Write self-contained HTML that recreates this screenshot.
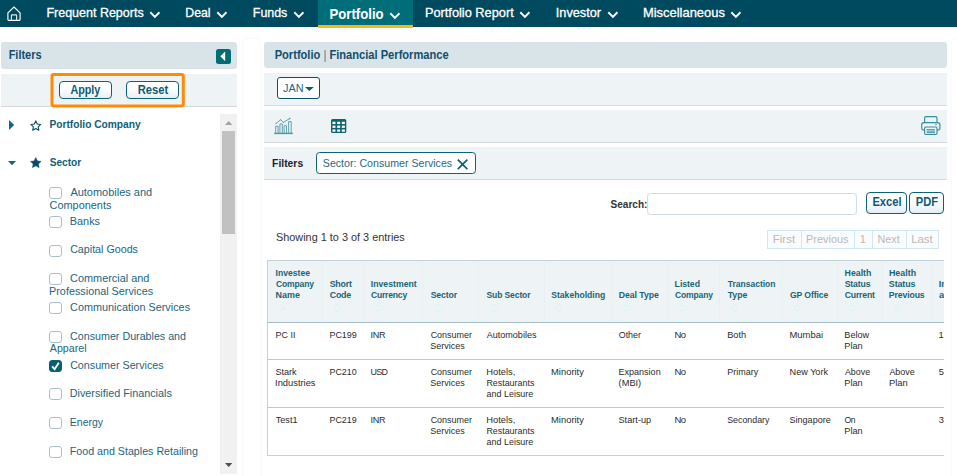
<!DOCTYPE html>
<html lang="en">
<head>
<meta charset="utf-8">
<title>Portfolio | Financial Performance</title>
<style>
*{box-sizing:border-box;margin:0;padding:0}
html,body{width:957px;height:476px;overflow:hidden;background:#fff}
body{position:relative;font-family:"Liberation Sans",sans-serif;font-size:11px;color:#333}
.a{position:absolute}
.t{position:absolute;white-space:nowrap;transform-origin:0 0;display:block}
svg{position:absolute;overflow:visible}
#nav{left:0;top:0;width:957px;height:27px;background:#004a60}
#tab{left:318px;top:0;width:95px;height:28px;background:#006e78;border-bottom:3px solid #ffb612}
.hdr{background:#d9e4e9;border-radius:3px}
.strip{background:#eef3f6;border-bottom:1px solid #d3d9dc}
.btn{border:1px solid #0f6273;border-radius:4px;background:linear-gradient(#ffffff,#fdfeff 45%,#e4eef7)}
.cb{left:49.3px;width:12.4px;height:12.3px;border:1px solid #a9c0ca;border-radius:3px;background:#fff}
.pg{top:230px;height:19px;border:1px solid #cfe7f6;background:#fafcfd}
#tw{left:267px;top:260px;width:677px;height:196px;overflow:hidden}
#tb{left:0;top:0;width:760px;height:196px;border:1px solid #c3d2d9;border-right:0}
.hl{left:0;width:760px;height:1px;background:#b7cbd3}
.vl{top:1px;width:1px;height:61px;background:#e9f0f3}
</style>
</head>
<body>
<!-- top navigation -->
<div id="nav" class="a"></div>
<div id="tab" class="a"></div>
<svg style="left:7.2px;top:6.2px" width="14" height="15" viewBox="0 0 14 15" fill="none" stroke="#fff" stroke-width="1.15" stroke-linejoin="round"><path d="M0.9 6.8 L7 1 L13.1 6.8 V13.6 Q13.1 14.3 12.4 14.3 H1.6 Q0.9 14.3 0.9 13.6 Z"/><path d="M4.4 14.3 V9.6 Q4.4 8.9 5.1 8.9 H8.9 Q9.6 8.9 9.6 9.6 V14.3" stroke="#dfe9ec"/></svg>
<svg style="left:150px;top:12.1px" width="9.8" height="6" viewBox="0 0 9.8 6" fill="none" stroke="#fff" stroke-width="1.9" stroke-linecap="square"><path d="M1 0.9 L4.9 4.8 L8.8 0.9"/></svg>
<svg style="left:217.2px;top:12.1px" width="9.8" height="6" viewBox="0 0 9.8 6" fill="none" stroke="#fff" stroke-width="1.9" stroke-linecap="square"><path d="M1 0.9 L4.9 4.8 L8.8 0.9"/></svg>
<svg style="left:294px;top:12.1px" width="9.8" height="6" viewBox="0 0 9.8 6" fill="none" stroke="#fff" stroke-width="1.9" stroke-linecap="square"><path d="M1 0.9 L4.9 4.8 L8.8 0.9"/></svg>
<svg style="left:389.5px;top:12.9px" width="9.8" height="6" viewBox="0 0 9.8 6" fill="none" stroke="#fff" stroke-width="1.9" stroke-linecap="square"><path d="M1 0.9 L4.9 4.8 L8.8 0.9"/></svg>
<svg style="left:520px;top:12.1px" width="9.8" height="6" viewBox="0 0 9.8 6" fill="none" stroke="#fff" stroke-width="1.9" stroke-linecap="square"><path d="M1 0.9 L4.9 4.8 L8.8 0.9"/></svg>
<svg style="left:608px;top:12.1px" width="9.8" height="6" viewBox="0 0 9.8 6" fill="none" stroke="#fff" stroke-width="1.9" stroke-linecap="square"><path d="M1 0.9 L4.9 4.8 L8.8 0.9"/></svg>
<svg style="left:731px;top:12.1px" width="9.8" height="6" viewBox="0 0 9.8 6" fill="none" stroke="#fff" stroke-width="1.9" stroke-linecap="square"><path d="M1 0.9 L4.9 4.8 L8.8 0.9"/></svg>

<!-- sidebar -->
<div class="a hdr" style="left:1px;top:42px;width:236px;height:26.5px"></div>
<div class="a" style="left:216px;top:49.3px;width:15px;height:14.4px;background:#006c76;border-radius:2.5px"></div>
<svg style="left:216px;top:49.3px" width="15" height="14.4" viewBox="0 0 15 14.4"><path d="M9.2 2.4 V12.3 L4.3 7.35 Z" fill="#fff"/></svg>
<div class="a strip" style="left:1px;top:74px;width:236px;height:32.7px"></div>
<svg style="left:0;top:0" width="240" height="120" viewBox="0 0 240 120"><rect x="52" y="74.6" width="131.3" height="31.3" rx="1.8" fill="none" stroke="#ff8a05" stroke-width="3"/></svg>
<div class="a btn" style="left:59px;top:81px;width:53px;height:17.8px"></div>
<div class="a btn" style="left:126px;top:81px;width:53px;height:17.8px"></div>
<svg style="left:8.8px;top:119.8px" width="5.2" height="10" viewBox="0 0 5.2 10"><path d="M0 0 L5.2 5 L0 10 Z" fill="#0b6b7c"/></svg>
<svg style="left:30px;top:120px" width="11.6" height="11" viewBox="0 0 24 23" fill="none" stroke="#0b4a66" stroke-width="2.3" stroke-linejoin="round"><path d="M12 1.8 L15.1 8.4 L22.3 9.3 L17 14.2 L18.4 21.3 L12 17.8 L5.6 21.3 L7 14.2 L1.7 9.3 L8.9 8.4 Z"/></svg>
<svg style="left:7.5px;top:161.2px" width="8" height="4.2" viewBox="0 0 8 4.2"><path d="M0 0 H8 L4 4.2 Z" fill="#0b6b7c"/></svg>
<svg style="left:30px;top:157.4px" width="11.6" height="11.2" viewBox="0 0 24 23" fill="#0b4a66" stroke="#0b4a66" stroke-width="1.2" stroke-linejoin="round"><path d="M12 1.2 L15.3 8.2 L22.9 9.1 L17.3 14.3 L18.8 21.9 L12 18.1 L5.2 21.9 L6.7 14.3 L1.1 9.1 L8.7 8.2 Z"/></svg>
<div class="a cb" style="top:187px"></div>
<div class="a cb" style="top:215.9px"></div>
<div class="a cb" style="top:244.5px"></div>
<div class="a cb" style="top:273.2px"></div>
<div class="a cb" style="top:302.1px"></div>
<div class="a cb" style="top:331px"></div>
<div class="a cb" style="top:359.7px;background:#0a6070;border-color:#0a6070"></div><svg style="left:49px;top:359.7px" width="13" height="12.5" viewBox="0 0 13 12.5" fill="none" stroke="#fff" stroke-width="1.9"><path d="M3.2 6.4 L5.6 9.2 L9.8 2.8"/></svg>
<div class="a cb" style="top:388.2px"></div>
<div class="a cb" style="top:417px"></div>
<div class="a cb" style="top:445.9px"></div>

<div class="a" style="left:220px;top:114px;width:17px;height:359.5px;background:#f1f1f1"></div>
<div class="a" style="left:222px;top:131px;width:13px;height:103px;background:#c1c1c1"></div>
<svg style="left:225px;top:121px" width="7.4" height="3.9" viewBox="0 0 7.4 3.9"><path d="M0 3.9 H7.4 L3.7 0 Z" fill="#a3a3a3"/></svg>
<svg style="left:224.8px;top:463px" width="7.4" height="4" viewBox="0 0 7.4 4"><path d="M0 0 H7.4 L3.7 4 Z" fill="#505050"/></svg>
<div class="a" style="left:242px;top:38px;width:18.5px;height:450px;border:1px solid #f9fafa;border-radius:5px"></div>
<div class="a" style="left:951px;top:38px;width:18px;height:450px;border:1px solid #f9fafa;border-radius:5px"></div>
<!-- main -->
<div class="a hdr" style="left:264px;top:42px;width:683px;height:25.7px"></div>
<div class="a strip" style="left:264px;top:73px;width:683px;height:32.6px"></div>
<div class="a" style="left:277.3px;top:77.4px;width:42.7px;height:21.4px;border:1px solid #0c5369;border-radius:3px;background:#fff"></div>
<svg style="left:305.4px;top:87px" width="8.8" height="3.9" viewBox="0 0 8.8 3.9"><path d="M0 0 H8.8 L4.4 3.9 Z" fill="#0b5c6b"/></svg>
<div class="a strip" style="left:264px;top:110px;width:683px;height:32.7px"></div>
<svg style="left:274px;top:117.6px" width="19" height="16.4" viewBox="0 0 19 16.4" fill="none" stroke="#46959e" stroke-width="0.85"><path d="M0.2 15.4 H18.8" stroke-width="1.5" stroke="#4a98a1"/><path d="M1.7 14.8 V8.2 H4.1 V14.8 M5.9 14.8 V6 H8.3 V14.8 M10.1 14.8 V7.8 H12.5 V14.8 M14.6 14.8 V3.6 H17.2 V14.8"/><path d="M1.9 5.6 L6.6 1.8 L9.4 4.4 L15.6 0.6" stroke-width="0.85"/><circle cx="1.9" cy="5.6" r="0.55" fill="#46959e" stroke="none"/><circle cx="6.6" cy="1.8" r="0.55" fill="#46959e" stroke="none"/><circle cx="9.4" cy="4.4" r="0.55" fill="#46959e" stroke="none"/><circle cx="15.8" cy="0.6" r="0.8" fill="#46959e" stroke="none"/></svg>
<svg style="left:330.8px;top:119px" width="15.3" height="14.1" viewBox="0 0 15.3 14.1"><rect width="15.3" height="14.1" rx="1.6" fill="#0b6670"/><rect x="1.45" y="2.75" width="3.0" height="2.3" fill="#fff"/><rect x="6.15" y="2.75" width="3.0" height="2.3" fill="#fff"/><rect x="10.85" y="2.75" width="3.0" height="2.3" fill="#fff"/><rect x="1.45" y="6.60" width="3.0" height="2.3" fill="#fff"/><rect x="6.15" y="6.60" width="3.0" height="2.3" fill="#fff"/><rect x="10.85" y="6.60" width="3.0" height="2.3" fill="#fff"/><rect x="1.45" y="10.45" width="3.0" height="2.3" fill="#fff"/><rect x="6.15" y="10.45" width="3.0" height="2.3" fill="#fff"/><rect x="10.85" y="10.45" width="3.0" height="2.3" fill="#fff"/></svg>
<svg style="left:920.8px;top:116.2px" width="19.6" height="19.2" viewBox="0 0 19.6 19.2" fill="none" stroke="#36909a" stroke-width="1.15" stroke-linejoin="round"><path d="M3.6 6.6 V2 Q3.6 0.7 4.9 0.7 H14.7 Q16 0.7 16 2 V6.6"/><rect x="0.7" y="6.6" width="18.2" height="7.6" rx="2.2"/><rect x="3.6" y="11" width="12.4" height="7.5" rx="1.2" fill="#eef3f6"/><path d="M5.6 13.6 H14 M5.6 15.2 H14 M5.6 16.6 H14" stroke-width="1.1" stroke="#5aa3ac"/><circle cx="15" cy="8.4" r="0.75" fill="#2f8a95" stroke="none"/></svg>

<div class="a strip" style="left:264px;top:147.1px;width:683px;height:32.7px"></div>
<div class="a" style="left:315.7px;top:152px;width:160.5px;height:22px;border:1px solid #0f6273;border-radius:3.5px;background:#fff"></div>
<svg style="left:456.8px;top:158.6px" width="11.2" height="10.8" viewBox="0 0 11.2 10.8" stroke="#0a6470" stroke-width="1.7" fill="none"><path d="M0.8 0.6 L10.4 10.2 M10.4 0.6 L0.8 10.2"/></svg>
<div class="a" style="left:647px;top:193.2px;width:210px;height:21.6px;border:1px solid #cfdde4;border-radius:3.5px;background:#fff"></div>
<div class="a btn" style="left:866px;top:191.8px;width:40.8px;height:22.1px"></div>
<div class="a btn" style="left:909px;top:191.8px;width:34.8px;height:22.1px"></div>
<div class="a pg" style="left:767px;width:34.5px"></div>
<div class="a pg" style="left:800.5px;width:54px"></div>
<div class="a pg" style="left:853.5px;width:19px"></div>
<div class="a pg" style="left:871.5px;width:35px"></div>
<div class="a pg" style="left:905.5px;width:33.5px"></div>
<span class="t" style="left:46px;top:6.10px;font-size:13px;line-height:13px;color:#fff;transform:translateX(0.38px) scaleX(0.9616);-webkit-text-stroke:0.3px #fff;">Frequent Reports</span>
<span class="t" style="left:185px;top:6.10px;font-size:13px;line-height:13px;color:#fff;transform:translateX(0.32px) scaleX(0.9433);-webkit-text-stroke:0.3px #fff;">Deal</span>
<span class="t" style="left:252px;top:6.10px;font-size:13px;line-height:13px;color:#fff;transform:translateX(0.83px) scaleX(0.9528);-webkit-text-stroke:0.3px #fff;">Funds</span>
<span class="t" style="left:329px;top:7.25px;font-size:14px;line-height:14px;font-weight:700;color:#fff;transform:translateX(0.58px) scaleX(0.9382);">Portfolio</span>
<span class="t" style="left:424px;top:6.10px;font-size:13px;line-height:13px;color:#fff;transform:translateX(0.91px) scaleX(0.9832);-webkit-text-stroke:0.3px #fff;">Portfolio Report</span>
<span class="t" style="left:555px;top:6.10px;font-size:13px;line-height:13px;color:#fff;transform:translateX(0.82px) scaleX(0.9777);-webkit-text-stroke:0.3px #fff;">Investor</span>
<span class="t" style="left:642px;top:6.10px;font-size:13px;line-height:13px;color:#fff;transform:translateX(0.9px) scaleX(0.9952);-webkit-text-stroke:0.3px #fff;">Miscellaneous</span>
<span class="t" style="left:8px;top:48.94px;font-size:12px;line-height:12px;font-weight:700;color:#144e6c;transform:translateX(0.65px) scaleX(0.9153);">Filters</span>
<span class="t" style="left:70px;top:83.94px;font-size:12px;line-height:12px;font-weight:700;color:#0f5a73;transform:translateX(0.41px) scaleX(0.8971);">Apply</span>
<span class="t" style="left:137px;top:83.94px;font-size:12px;line-height:12px;font-weight:700;color:#0f5a73;transform:translateX(0.79px) scaleX(0.9324);">Reset</span>
<span class="t" style="left:49px;top:118.79px;font-size:11px;line-height:11px;font-weight:700;color:#0e5f78;transform:translateX(0.49px) scaleX(0.9265);">Portfolio Company</span>
<span class="t" style="left:49px;top:156.79px;font-size:11px;line-height:11px;font-weight:700;color:#0e5f78;transform:translateX(0.7px) scaleX(0.9215);">Sector</span>
<span class="t" style="left:70px;top:186.79px;font-size:11px;line-height:11px;color:#1c6580;transform:translateX(0.38px) scaleX(0.9973);">Automobiles and</span>
<span class="t" style="left:49px;top:199.79px;font-size:11px;line-height:11px;color:#1c6580;transform:translateX(0.56px) scaleX(0.9908);">Components</span>
<span class="t" style="left:69px;top:215.79px;font-size:11px;line-height:11px;color:#1c6580;transform:translateX(0.75px) scaleX(0.9904);">Banks</span>
<span class="t" style="left:70px;top:243.79px;font-size:11px;line-height:11px;color:#1c6580;transform:translateX(0.14px) scaleX(0.9729);">Capital Goods</span>
<span class="t" style="left:70px;top:272.79px;font-size:11px;line-height:11px;color:#1c6580;transform:translateX(0.12px) scaleX(0.99);">Commercial and</span>
<span class="t" style="left:49px;top:285.79px;font-size:11px;line-height:11px;color:#1c6580;transform:translateX(0.05px) scaleX(0.9837);">Professional Services</span>
<span class="t" style="left:70px;top:301.79px;font-size:11px;line-height:11px;color:#1c6580;transform:translateX(0.12px) scaleX(0.9859);">Communication Services</span>
<span class="t" style="left:70px;top:330.79px;font-size:11px;line-height:11px;color:#1c6580;transform:translateX(0.12px) scaleX(0.9719);">Consumer Durables and</span>
<span class="t" style="left:49px;top:342.79px;font-size:11px;line-height:11px;color:#1c6580;transform:translateX(0.87px) scaleX(0.9658);">Apparel</span>
<span class="t" style="left:70px;top:359.79px;font-size:11px;line-height:11px;color:#1c6580;transform:translateX(0.14px) scaleX(0.9734);">Consumer Services</span>
<span class="t" style="left:69px;top:387.79px;font-size:11px;line-height:11px;color:#1c6580;transform:translateX(0.73px) scaleX(0.9822);">Diversified Financials</span>
<span class="t" style="left:69px;top:416.79px;font-size:11px;line-height:11px;color:#1c6580;transform:translateX(0.86px) scaleX(0.9543);">Energy</span>
<span class="t" style="left:69px;top:445.79px;font-size:11px;line-height:11px;color:#1c6580;transform:translateX(0.77px) scaleX(0.9702);">Food and Staples Retailing</span>
<span class="t" style="left:274px;top:48.94px;font-size:12px;line-height:12px;font-weight:700;color:#144e6c;transform:translateX(0.64px) scaleX(0.9265);">Portfolio <span style="font-weight:400;color:#3f7f93">|</span> Financial Performance</span>
<span class="t" style="left:282px;top:82.79px;font-size:11px;line-height:11px;color:#1c6580;transform:translateX(0.99px) scaleX(0.9851);">JAN</span>
<span class="t" style="left:272px;top:157.79px;font-size:11px;line-height:11px;font-weight:700;color:#222;transform:translateX(0.09px) scaleX(0.9411);">Filters</span>
<span class="t" style="left:322px;top:157.79px;font-size:11px;line-height:11px;color:#2a6a80;transform:translateX(0.79px) scaleX(0.9662);">Sector: Consumer Services</span>
<span class="t" style="left:610px;top:198.79px;font-size:11px;line-height:11px;font-weight:700;color:#333;transform:translateX(0.51px) scaleX(0.9152);">Search:</span>
<span class="t" style="left:872px;top:195.94px;font-size:12px;line-height:12px;font-weight:700;color:#0f5a73;transform:translateX(0.43px) scaleX(0.9288);">Excel</span>
<span class="t" style="left:915px;top:195.94px;font-size:12px;line-height:12px;font-weight:700;color:#0f5a73;transform:translateX(0.82px) scaleX(0.9246);">PDF</span>
<span class="t" style="left:275px;top:231.79px;font-size:11px;line-height:11px;color:#333;transform:translateX(0.95px) scaleX(0.9893);">Showing 1 to 3 of 3 entries</span>
<span class="t" style="left:772px;top:233.79px;font-size:11px;line-height:11px;color:#b9b9b9;transform:translateX(0.71px) scaleX(1.0476);">First</span>
<span class="t" style="left:806px;top:233.79px;font-size:11px;line-height:11px;color:#b9b9b9;transform:translateX(0.09px) scaleX(0.9896);">Previous</span>
<span class="t" style="left:859px;top:233.79px;font-size:11px;line-height:11px;color:#b9b9b9;transform:translateX(0.72px) scaleX(1);">1</span>
<span class="t" style="left:877px;top:233.79px;font-size:11px;line-height:11px;color:#b9b9b9;transform:translateX(0.5px) scaleX(0.9835);">Next</span>
<span class="t" style="left:911px;top:233.79px;font-size:11px;line-height:11px;color:#b9b9b9;transform:translateX(0.22px) scaleX(1.0322);">Last</span>
<!-- table -->
<div id="tw" class="a">
<div id="tb" class="a"></div>
<div class="a" style="left:1px;top:1px;width:760px;height:61.5px;background:#eef3f6"></div>
<div class="a vl" style="left:54.5px"></div><div class="a vl" style="left:96.2px"></div><div class="a vl" style="left:155.2px"></div><div class="a vl" style="left:211.3px"></div><div class="a vl" style="left:276.6px"></div><div class="a vl" style="left:343.6px"></div><div class="a vl" style="left:399.5px"></div><div class="a vl" style="left:452.2px"></div><div class="a vl" style="left:514.8px"></div><div class="a vl" style="left:569.5px"></div><div class="a vl" style="left:614.5px"></div><div class="a vl" style="left:664.1px"></div>
<div class="a hl" style="top:62px;background:#a5c0ca"></div>
<div class="a hl" style="top:99px"></div>
<div class="a hl" style="top:147px"></div>
<svg style="left:12.7px;top:46px" width="6.6" height="4" viewBox="0 0 6.6 4"><path d="M0 4 H6.6 L3.3 0 Z" fill="#d6f6fa"/></svg><svg style="left:67.2px;top:43.8px" width="6.4" height="8.4" viewBox="0 0 6.4 8.4" fill="none" stroke="#d6f6fa" stroke-width="1.1"><path d="M0.5 3.2 L3.2 0.7 L5.9 3.2 M0.5 5.2 L3.2 7.7 L5.9 5.2"/></svg><svg style="left:108.3px;top:43.8px" width="6.4" height="8.4" viewBox="0 0 6.4 8.4" fill="none" stroke="#d6f6fa" stroke-width="1.1"><path d="M0.5 3.2 L3.2 0.7 L5.9 3.2 M0.5 5.2 L3.2 7.7 L5.9 5.2"/></svg><svg style="left:168.2px;top:43.8px" width="6.4" height="8.4" viewBox="0 0 6.4 8.4" fill="none" stroke="#d6f6fa" stroke-width="1.1"><path d="M0.5 3.2 L3.2 0.7 L5.9 3.2 M0.5 5.2 L3.2 7.7 L5.9 5.2"/></svg><svg style="left:224.0px;top:43.8px" width="6.4" height="8.4" viewBox="0 0 6.4 8.4" fill="none" stroke="#d6f6fa" stroke-width="1.1"><path d="M0.5 3.2 L3.2 0.7 L5.9 3.2 M0.5 5.2 L3.2 7.7 L5.9 5.2"/></svg><svg style="left:288.7px;top:43.8px" width="6.4" height="8.4" viewBox="0 0 6.4 8.4" fill="none" stroke="#d6f6fa" stroke-width="1.1"><path d="M0.5 3.2 L3.2 0.7 L5.9 3.2 M0.5 5.2 L3.2 7.7 L5.9 5.2"/></svg><svg style="left:356.3px;top:43.8px" width="6.4" height="8.4" viewBox="0 0 6.4 8.4" fill="none" stroke="#d6f6fa" stroke-width="1.1"><path d="M0.5 3.2 L3.2 0.7 L5.9 3.2 M0.5 5.2 L3.2 7.7 L5.9 5.2"/></svg><svg style="left:412.1px;top:43.8px" width="6.4" height="8.4" viewBox="0 0 6.4 8.4" fill="none" stroke="#d6f6fa" stroke-width="1.1"><path d="M0.5 3.2 L3.2 0.7 L5.9 3.2 M0.5 5.2 L3.2 7.7 L5.9 5.2"/></svg><svg style="left:464.8px;top:43.8px" width="6.4" height="8.4" viewBox="0 0 6.4 8.4" fill="none" stroke="#d6f6fa" stroke-width="1.1"><path d="M0.5 3.2 L3.2 0.7 L5.9 3.2 M0.5 5.2 L3.2 7.7 L5.9 5.2"/></svg><svg style="left:527.1px;top:43.8px" width="6.4" height="8.4" viewBox="0 0 6.4 8.4" fill="none" stroke="#d6f6fa" stroke-width="1.1"><path d="M0.5 3.2 L3.2 0.7 L5.9 3.2 M0.5 5.2 L3.2 7.7 L5.9 5.2"/></svg><svg style="left:581.9px;top:43.8px" width="6.4" height="8.4" viewBox="0 0 6.4 8.4" fill="none" stroke="#d6f6fa" stroke-width="1.1"><path d="M0.5 3.2 L3.2 0.7 L5.9 3.2 M0.5 5.2 L3.2 7.7 L5.9 5.2"/></svg><svg style="left:626.4px;top:43.8px" width="6.4" height="8.4" viewBox="0 0 6.4 8.4" fill="none" stroke="#d6f6fa" stroke-width="1.1"><path d="M0.5 3.2 L3.2 0.7 L5.9 3.2 M0.5 5.2 L3.2 7.7 L5.9 5.2"/></svg>
<span class="t" style="left:8px;top:7.64px;font-size:10px;line-height:10px;font-weight:700;color:#1a6478;letter-spacing:-0.015px;transform-origin:0 8.46px;transform:translateX(0.62px) scale(0.8613,0.95);">Investee</span>
<span class="t" style="left:8px;top:18.64px;font-size:10px;line-height:10px;font-weight:700;color:#1a6478;letter-spacing:-0.167px;transform-origin:0 8.46px;transform:translateX(0.93px) scale(0.8545,0.95);">Company</span>
<span class="t" style="left:8px;top:29.64px;font-size:10px;line-height:10px;font-weight:700;color:#1a6478;transform-origin:0 8.46px;transform:translateX(0.59px) scale(0.8919,0.95);">Name</span>
<span class="t" style="left:62px;top:18.64px;font-size:10px;line-height:10px;font-weight:700;color:#1a6478;letter-spacing:-0.206px;transform-origin:0 8.46px;transform:translateX(0.64px) scale(0.8849,0.95);">Short</span>
<span class="t" style="left:62px;top:29.64px;font-size:10px;line-height:10px;font-weight:700;color:#1a6478;letter-spacing:-0.265px;transform-origin:0 8.46px;transform:translateX(0.71px) scale(0.887,0.95);">Code</span>
<span class="t" style="left:103px;top:18.64px;font-size:10px;line-height:10px;font-weight:700;color:#1a6478;transform-origin:0 8.46px;transform:translateX(0.75px) scale(0.8711,0.95);">Investment</span>
<span class="t" style="left:103px;top:29.64px;font-size:10px;line-height:10px;font-weight:700;color:#1a6478;letter-spacing:-0.23px;transform-origin:0 8.46px;transform:translateX(0.93px) scale(0.8575,0.95);">Currency</span>
<span class="t" style="left:163px;top:29.64px;font-size:10px;line-height:10px;font-weight:700;color:#1a6478;letter-spacing:-0.127px;transform-origin:0 8.46px;transform:translateX(0.66px) scale(0.8661,0.95);">Sector</span>
<span class="t" style="left:219px;top:29.64px;font-size:10px;line-height:10px;font-weight:700;color:#1a6478;letter-spacing:-0.137px;transform-origin:0 8.46px;transform:translateX(0.47px) scale(0.855,0.95);">Sub Sector</span>
<span class="t" style="left:284px;top:29.64px;font-size:10px;line-height:10px;font-weight:700;color:#1a6478;transform-origin:0 8.46px;transform:translateX(0.25px) scale(0.8594,0.95);">Stakeholding</span>
<span class="t" style="left:351px;top:29.64px;font-size:10px;line-height:10px;font-weight:700;color:#1a6478;letter-spacing:-0.034px;transform-origin:0 8.46px;transform:translateX(0.76px) scale(0.8683,0.95);">Deal Type</span>
<span class="t" style="left:407px;top:18.64px;font-size:10px;line-height:10px;font-weight:700;color:#1a6478;letter-spacing:-0.058px;transform-origin:0 8.46px;transform:translateX(0.62px) scale(0.8688,0.95);">Listed</span>
<span class="t" style="left:407px;top:29.64px;font-size:10px;line-height:10px;font-weight:700;color:#1a6478;letter-spacing:-0.167px;transform-origin:0 8.46px;transform:translateX(0.93px) scale(0.8545,0.95);">Company</span>
<span class="t" style="left:460px;top:18.64px;font-size:10px;line-height:10px;font-weight:700;color:#1a6478;transform-origin:0 8.46px;transform:translateX(0.74px) scale(0.8501,0.95);">Transaction</span>
<span class="t" style="left:460px;top:29.64px;font-size:10px;line-height:10px;font-weight:700;color:#1a6478;letter-spacing:-0.099px;transform-origin:0 8.46px;transform:translateX(0.73px) scale(0.8765,0.95);">Type</span>
<span class="t" style="left:522px;top:29.64px;font-size:10px;line-height:10px;font-weight:700;color:#1a6478;letter-spacing:-0.096px;transform-origin:0 8.46px;transform:translateX(0.9px) scale(0.8593,0.95);">GP Office</span>
<span class="t" style="left:577px;top:7.64px;font-size:10px;line-height:10px;font-weight:700;color:#1a6478;transform-origin:0 8.46px;transform:translateX(0.56px) scale(0.8763,0.95);">Health</span>
<span class="t" style="left:577px;top:18.64px;font-size:10px;line-height:10px;font-weight:700;color:#1a6478;letter-spacing:-0.129px;transform-origin:0 8.46px;transform:translateX(0.63px) scale(0.8691,0.95);">Status</span>
<span class="t" style="left:577px;top:29.64px;font-size:10px;line-height:10px;font-weight:700;color:#1a6478;letter-spacing:-0.238px;transform-origin:0 8.46px;transform:translateX(0.73px) scale(0.8695,0.95);">Current</span>
<span class="t" style="left:621px;top:7.64px;font-size:10px;line-height:10px;font-weight:700;color:#1a6478;transform-origin:0 8.46px;transform:translateX(0.97px) scale(0.8865,0.95);">Health</span>
<span class="t" style="left:621px;top:18.64px;font-size:10px;line-height:10px;font-weight:700;color:#1a6478;letter-spacing:-0.105px;transform-origin:0 8.46px;transform:translateX(0.82px) scale(0.8873,0.95);">Status</span>
<span class="t" style="left:621px;top:29.64px;font-size:10px;line-height:10px;font-weight:700;color:#1a6478;letter-spacing:-0.128px;transform-origin:0 8.46px;transform:translateX(0.78px) scale(0.8688,0.95);">Previous</span>
<span class="t" style="left:671px;top:18.64px;font-size:10px;line-height:10px;font-weight:700;color:#1a6478;letter-spacing:-0.1px;transform-origin:0 8.46px;transform:translateX(0.81px) scale(0.93,0.95);">Investment</span>
<span class="t" style="left:671px;top:29.64px;font-size:10px;line-height:10px;font-weight:700;color:#1a6478;letter-spacing:-0.1px;transform-origin:0 8.46px;transform:translateX(0.96px) scale(0.93,0.95);">amount</span>
<span class="t" style="left:8px;top:69.64px;font-size:10px;line-height:10px;color:#2b2b2b;transform-origin:0 8.46px;transform:translateX(0.62px) scale(0.8915,0.95);">PC II</span>
<span class="t" style="left:62px;top:69.64px;font-size:10px;line-height:10px;color:#2b2b2b;transform-origin:0 8.46px;transform:translateX(0.43px) scale(0.8932,0.95);">PC199</span>
<span class="t" style="left:103px;top:69.64px;font-size:10px;line-height:10px;color:#2b2b2b;letter-spacing:-0.345px;transform-origin:0 8.46px;transform:translateX(0.51px) scale(0.9041,0.95);">INR</span>
<span class="t" style="left:163px;top:69.64px;font-size:10px;line-height:10px;color:#2b2b2b;transform-origin:0 8.46px;transform:translateX(0.63px) scale(0.895,0.95);">Consumer</span>
<span class="t" style="left:163px;top:80.64px;font-size:10px;line-height:10px;color:#2b2b2b;transform-origin:0 8.46px;transform:translateX(0.28px) scale(0.8955,0.95);">Services</span>
<span class="t" style="left:219px;top:69.64px;font-size:10px;line-height:10px;color:#2b2b2b;transform-origin:0 8.46px;transform:translateX(0.65px) scale(0.9057,0.95);">Automobiles</span>
<span class="t" style="left:351px;top:69.64px;font-size:10px;line-height:10px;color:#2b2b2b;letter-spacing:-0.081px;transform-origin:0 8.46px;transform:translateX(0.83px) scale(0.8921,0.95);">Other</span>
<span class="t" style="left:407px;top:69.64px;font-size:10px;line-height:10px;color:#2b2b2b;letter-spacing:-0.603px;transform-origin:0 8.46px;transform:translateX(0.59px) scale(0.9494,0.95);">No</span>
<span class="t" style="left:460px;top:69.64px;font-size:10px;line-height:10px;color:#2b2b2b;transform-origin:0 8.46px;transform:translateX(0.14px) scale(0.9187,0.95);">Both</span>
<span class="t" style="left:522px;top:69.64px;font-size:10px;line-height:10px;color:#2b2b2b;transform-origin:0 8.46px;transform:translateX(0.52px) scale(0.9425,0.95);">Mumbai</span>
<span class="t" style="left:577px;top:69.64px;font-size:10px;line-height:10px;color:#2b2b2b;transform-origin:0 8.46px;transform:translateX(0.34px) scale(0.9101,0.95);">Below</span>
<span class="t" style="left:577px;top:80.64px;font-size:10px;line-height:10px;color:#2b2b2b;transform-origin:0 8.46px;transform:translateX(0.3px) scale(0.9161,0.95);">Plan</span>
<span class="t" style="left:671px;top:69.64px;font-size:10px;line-height:10px;color:#2b2b2b;letter-spacing:-0.1px;transform-origin:0 8.46px;transform:translateX(0.51px) scale(0.93,0.95);">1,250.00</span>
<span class="t" style="left:8px;top:106.64px;font-size:10px;line-height:10px;color:#2b2b2b;letter-spacing:-0.073px;transform-origin:0 8.46px;transform:translateX(0.59px) scale(0.9105,0.95);">Stark</span>
<span class="t" style="left:8px;top:117.64px;font-size:10px;line-height:10px;color:#2b2b2b;transform-origin:0 8.46px;transform:translateX(0.05px) scale(0.9339,0.95);">Industries</span>
<span class="t" style="left:62px;top:106.64px;font-size:10px;line-height:10px;color:#2b2b2b;transform-origin:0 8.46px;transform:translateX(0.43px) scale(0.892,0.95);">PC210</span>
<span class="t" style="left:103px;top:106.64px;font-size:10px;line-height:10px;color:#2b2b2b;letter-spacing:-0.803px;transform-origin:0 8.46px;transform:translateX(0.61px) scale(0.8954,0.95);">USD</span>
<span class="t" style="left:163px;top:106.64px;font-size:10px;line-height:10px;color:#2b2b2b;transform-origin:0 8.46px;transform:translateX(0.63px) scale(0.895,0.95);">Consumer</span>
<span class="t" style="left:163px;top:117.64px;font-size:10px;line-height:10px;color:#2b2b2b;transform-origin:0 8.46px;transform:translateX(0.28px) scale(0.8955,0.95);">Services</span>
<span class="t" style="left:219px;top:106.64px;font-size:10px;line-height:10px;color:#2b2b2b;transform-origin:0 8.46px;transform:translateX(0.29px) scale(0.9338,0.95);">Hotels,</span>
<span class="t" style="left:219px;top:117.64px;font-size:10px;line-height:10px;color:#2b2b2b;transform-origin:0 8.46px;transform:translateX(0.39px) scale(0.889,0.95);">Restaurants</span>
<span class="t" style="left:219px;top:128.64px;font-size:10px;line-height:10px;color:#2b2b2b;transform-origin:0 8.46px;transform:translateX(0.61px) scale(0.8928,0.95);">and Leisure</span>
<span class="t" style="left:284px;top:106.64px;font-size:10px;line-height:10px;color:#2b2b2b;transform-origin:0 8.46px;transform:translateX(0.04px) scale(0.9382,0.95);">Minority</span>
<span class="t" style="left:351px;top:106.64px;font-size:10px;line-height:10px;color:#2b2b2b;transform-origin:0 8.46px;transform:translateX(0.57px) scale(0.901,0.95);">Expansion</span>
<span class="t" style="left:351px;top:117.64px;font-size:10px;line-height:10px;color:#2b2b2b;transform-origin:0 8.46px;transform:translateX(0.6px) scale(0.9244,0.95);">(MBI)</span>
<span class="t" style="left:407px;top:106.64px;font-size:10px;line-height:10px;color:#2b2b2b;letter-spacing:-0.603px;transform-origin:0 8.46px;transform:translateX(0.59px) scale(0.9494,0.95);">No</span>
<span class="t" style="left:460px;top:106.64px;font-size:10px;line-height:10px;color:#2b2b2b;transform-origin:0 8.46px;transform:translateX(0.2px) scale(0.8981,0.95);">Primary</span>
<span class="t" style="left:522px;top:106.64px;font-size:10px;line-height:10px;color:#2b2b2b;transform-origin:0 8.46px;transform:translateX(0.58px) scale(0.9093,0.95);">New York</span>
<span class="t" style="left:577px;top:106.64px;font-size:10px;line-height:10px;color:#2b2b2b;transform-origin:0 8.46px;transform:translateX(0.88px) scale(0.8885,0.95);">Above</span>
<span class="t" style="left:577px;top:117.64px;font-size:10px;line-height:10px;color:#2b2b2b;transform-origin:0 8.46px;transform:translateX(0.3px) scale(0.9161,0.95);">Plan</span>
<span class="t" style="left:622px;top:106.64px;font-size:10px;line-height:10px;color:#2b2b2b;transform-origin:0 8.46px;transform:translateX(0.38px) scale(0.8944,0.95);">Above</span>
<span class="t" style="left:621px;top:117.64px;font-size:10px;line-height:10px;color:#2b2b2b;transform-origin:0 8.46px;transform:translateX(0.9px) scale(0.9413,0.95);">Plan</span>
<span class="t" style="left:671px;top:106.64px;font-size:10px;line-height:10px;color:#2b2b2b;letter-spacing:-0.1px;transform-origin:0 8.46px;transform:translateX(0.75px) scale(0.93,0.95);">5,000.00</span>
<span class="t" style="left:8px;top:154.64px;font-size:10px;line-height:10px;color:#2b2b2b;transform-origin:0 8.46px;transform:translateX(0.71px) scale(0.9113,0.95);">Test1</span>
<span class="t" style="left:62px;top:154.64px;font-size:10px;line-height:10px;color:#2b2b2b;transform-origin:0 8.46px;transform:translateX(0.43px) scale(0.8932,0.95);">PC219</span>
<span class="t" style="left:103px;top:154.64px;font-size:10px;line-height:10px;color:#2b2b2b;letter-spacing:-0.345px;transform-origin:0 8.46px;transform:translateX(0.51px) scale(0.9041,0.95);">INR</span>
<span class="t" style="left:163px;top:154.64px;font-size:10px;line-height:10px;color:#2b2b2b;transform-origin:0 8.46px;transform:translateX(0.63px) scale(0.895,0.95);">Consumer</span>
<span class="t" style="left:163px;top:165.64px;font-size:10px;line-height:10px;color:#2b2b2b;transform-origin:0 8.46px;transform:translateX(0.28px) scale(0.8955,0.95);">Services</span>
<span class="t" style="left:219px;top:154.64px;font-size:10px;line-height:10px;color:#2b2b2b;transform-origin:0 8.46px;transform:translateX(0.29px) scale(0.9338,0.95);">Hotels,</span>
<span class="t" style="left:219px;top:165.64px;font-size:10px;line-height:10px;color:#2b2b2b;transform-origin:0 8.46px;transform:translateX(0.39px) scale(0.889,0.95);">Restaurants</span>
<span class="t" style="left:219px;top:176.64px;font-size:10px;line-height:10px;color:#2b2b2b;transform-origin:0 8.46px;transform:translateX(0.61px) scale(0.8928,0.95);">and Leisure</span>
<span class="t" style="left:284px;top:154.64px;font-size:10px;line-height:10px;color:#2b2b2b;transform-origin:0 8.46px;transform:translateX(0.04px) scale(0.9382,0.95);">Minority</span>
<span class="t" style="left:351px;top:154.64px;font-size:10px;line-height:10px;color:#2b2b2b;transform-origin:0 8.46px;transform:translateX(0.5px) scale(0.9182,0.95);">Start-up</span>
<span class="t" style="left:407px;top:154.64px;font-size:10px;line-height:10px;color:#2b2b2b;letter-spacing:-0.603px;transform-origin:0 8.46px;transform:translateX(0.59px) scale(0.9494,0.95);">No</span>
<span class="t" style="left:460px;top:154.64px;font-size:10px;line-height:10px;color:#2b2b2b;transform-origin:0 8.46px;transform:translateX(0.23px) scale(0.883,0.95);">Secondary</span>
<span class="t" style="left:522px;top:154.64px;font-size:10px;line-height:10px;color:#2b2b2b;transform-origin:0 8.46px;transform:translateX(0.57px) scale(0.9017,0.95);">Singapore</span>
<span class="t" style="left:577px;top:154.64px;font-size:10px;line-height:10px;color:#2b2b2b;letter-spacing:-0.516px;transform-origin:0 8.46px;transform:translateX(0.58px) scale(0.8579,0.95);">On</span>
<span class="t" style="left:577px;top:165.64px;font-size:10px;line-height:10px;color:#2b2b2b;transform-origin:0 8.46px;transform:translateX(0.3px) scale(0.9161,0.95);">Plan</span>
<span class="t" style="left:671px;top:154.64px;font-size:10px;line-height:10px;color:#2b2b2b;letter-spacing:-0.1px;transform-origin:0 8.46px;transform:translateX(0.73px) scale(0.93,0.95);">3,000.00</span>
</div>
</body>
</html>
